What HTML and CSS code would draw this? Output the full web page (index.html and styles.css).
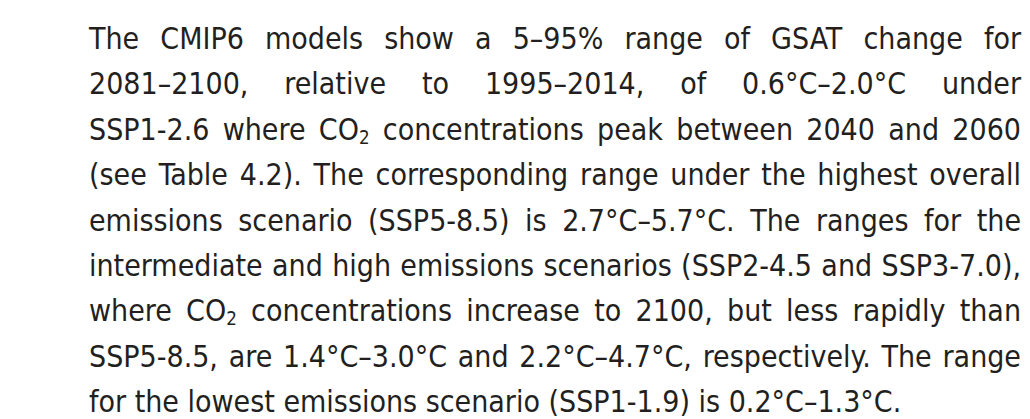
FILE: index.html
```html
<!DOCTYPE html>
<html lang="en">
<head>
<meta charset="utf-8">
<title>CMIP6 GSAT ranges</title>
<link rel="stylesheet" href="styles.css">
</head>
<body>
<main class="page">
<p class="para">
<span class="line">The CMIP6 models show a 5–95% range of GSAT change for</span>
<span class="line">2081–2100, relative to 1995–2014, of 0.6°C–2.0°C under</span>
<span class="line">SSP1-2.6 where CO<sub class="sub">2</sub> concentrations peak between 2040 and 2060</span>
<span class="line">(see Table 4.2). The corresponding range under the highest overall</span>
<span class="line">emissions scenario (SSP5-8.5) is 2.7°C–5.7°C. The ranges for the</span>
<span class="line">intermediate and high emissions scenarios (SSP2-4.5 and SSP3-7.0),</span>
<span class="line">where CO<sub class="sub">2</sub> concentrations increase to 2100, but less rapidly than</span>
<span class="line">SSP5-8.5, are 1.4°C–3.0°C and 2.2°C–4.7°C, respectively. The range</span>
<span class="line last">for the lowest emissions scenario (SSP1-1.9) is 0.2°C–1.3°C.</span>
</p>
</main>
</body>
</html>
```
FILE: styles.css
```css
html, body {
  margin: 0;
  padding: 0;
  background: #ffffff;
}
.page {
  padding: 16px 0 0 89px;
  width: 932px;
}
.para {
  margin: 0;
  font-family: "DejaVu Sans Condensed", "DejaVu Sans", sans-serif;
  font-stretch: condensed;
  font-size: 30px;
  line-height: 45.4px;
  color: #231f20;
}
.line {
  display: block;
  text-align: justify;
  text-align-last: justify;
  white-space: nowrap;
}
.line.last {
  text-align-last: left;
}
.sub {
  font-size: 0.62em;
  line-height: 0;
  vertical-align: -0.22em;
}
```
